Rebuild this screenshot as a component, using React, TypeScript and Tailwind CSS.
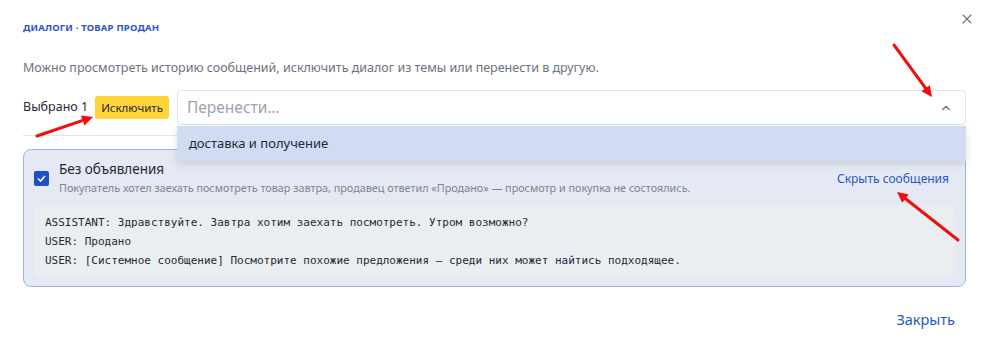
import { ChevronUp, X } from "lucide-react";

const messages = [
  "ASSISTANT: Здравствуйте. Завтра хотим заехать посмотреть. Утром возможно?",
  "USER: Продано",
  "USER: [Системное сообщение] Посмотрите похожие предложения — среди них может найтись подходящее.",
];

const Arrow = ({ x1, y1, x2, y2 }: { x1: number; y1: number; x2: number; y2: number }) => {
  const a = Math.atan2(y2 - y1, x2 - x1);
  const len = 12;
  const w = 0.45;
  const p1 = `${x2 - len * Math.cos(a - w)},${y2 - len * Math.sin(a - w)}`;
  const p2 = `${x2 - len * Math.cos(a + w)},${y2 - len * Math.sin(a + w)}`;
  return (
    <g>
      <line x1={x1} y1={y1} x2={x2 - 6 * Math.cos(a)} y2={y2 - 6 * Math.sin(a)} stroke="#f20d0d" strokeWidth={3} strokeLinecap="round" />
      <polygon points={`${x2},${y2} ${p1} ${p2}`} fill="#f20d0d" />
    </g>
  );
};

export default function App() {
  return (
    <div className="relative w-[989px] h-[359px] bg-white px-[23px] pt-[22px] font-['Noto_Sans',sans-serif] text-[#1f2937]">
      <button className="absolute right-[14px] top-[11px] text-[#6b7280]">
        <X size={16} strokeWidth={1.6} />
      </button>

      <div className="text-[9.5px] font-bold uppercase tracking-[0.2px] text-[#2a56c6] leading-[12px]">
        Диалоги · Товар продан
      </div>

      <p className="mt-[25px] text-[12.5px] leading-[18px] text-[#6b7280]">
        Можно просмотреть историю сообщений, исключить диалог из темы или перенести в другую.
      </p>

      <div className="mt-[13px] flex items-center gap-[8px] pb-[10px] border-b border-[#dfe3ea]">
        <span className="text-[12.5px] text-[#1f2937]">Выбрано 1</span>
        <button className="h-[23px] rounded-[3px] bg-[#fdd43a] px-[6px] text-[11.5px] text-[#1f2937] -ml-[1px]">
          Исключить
        </button>
        <div className="relative flex-1">
          <div className="flex h-[35px] items-center justify-between rounded-[4px] border border-[#dde3ec] bg-white pl-[9px] pr-[12px]">
            <span className="text-[15.5px] text-[#9ca3af]">Перенести…</span>
            <ChevronUp size={14} strokeWidth={2} className="text-[#6b7280]" />
          </div>
          <div className="absolute left-0 right-0 top-[36px] z-10 flex h-[35px] items-center bg-[#cfdcf3] px-[12px] text-[13px] text-[#1f2937] shadow-[0_3px_8px_rgba(0,0,0,0.12)]">
            доставка и получение
          </div>
        </div>
      </div>

      <div className="mt-[13px] rounded-[8px] border border-[#9fb4e3] bg-[#e4e9f3] px-[10px] pt-[10px] pb-[9px]">
        <div className="flex items-center gap-[10px]">
          <div className="flex h-[15px] w-[15px] shrink-0 items-center justify-center rounded-[2px] bg-[#1e4fc8]">
            <svg width="9" height="7" viewBox="0 0 9 7">
              <path d="M1 3.5 L3.5 6 L8 1" fill="none" stroke="white" strokeWidth="1.6" />
            </svg>
          </div>
          <div className="flex-1">
            <div className="text-[13.5px] leading-[19px] text-[#1f2937]">Без объявления</div>
            <div className="text-[10.8px] leading-[18px] text-[#7b8494]">
              Покупатель хотел заехать посмотреть товар завтра, продавец ответил «Продано» — просмотр и покупка не состоялись.
            </div>
          </div>
          <button className="mr-[6px] text-[12px] text-[#2a56c6]">Скрыть сообщения</button>
        </div>
        <div className="mt-[9px] rounded-[6px] bg-[#ebeef1] px-[11px] py-[7px] font-['DejaVu_Sans_Mono',monospace] text-[11px] leading-[19px] text-[#1f2937]">
          {messages.map((m, i) => (
            <div key={i}>{m}</div>
          ))}
        </div>
      </div>

      <div className="mt-[22px] flex justify-end pr-[11px]">
        <button className="text-[14.5px] text-[#2a56c6]">Закрыть</button>
      </div>

      <svg className="pointer-events-none absolute inset-0 z-20" width="989" height="359">
        <Arrow x1={37} y1={136} x2={93} y2={117} />
        <Arrow x1={894} y1={45} x2={932} y2={97} />
        <Arrow x1={958} y1={240} x2={897} y2={192} />
      </svg>
    </div>
  );
}
